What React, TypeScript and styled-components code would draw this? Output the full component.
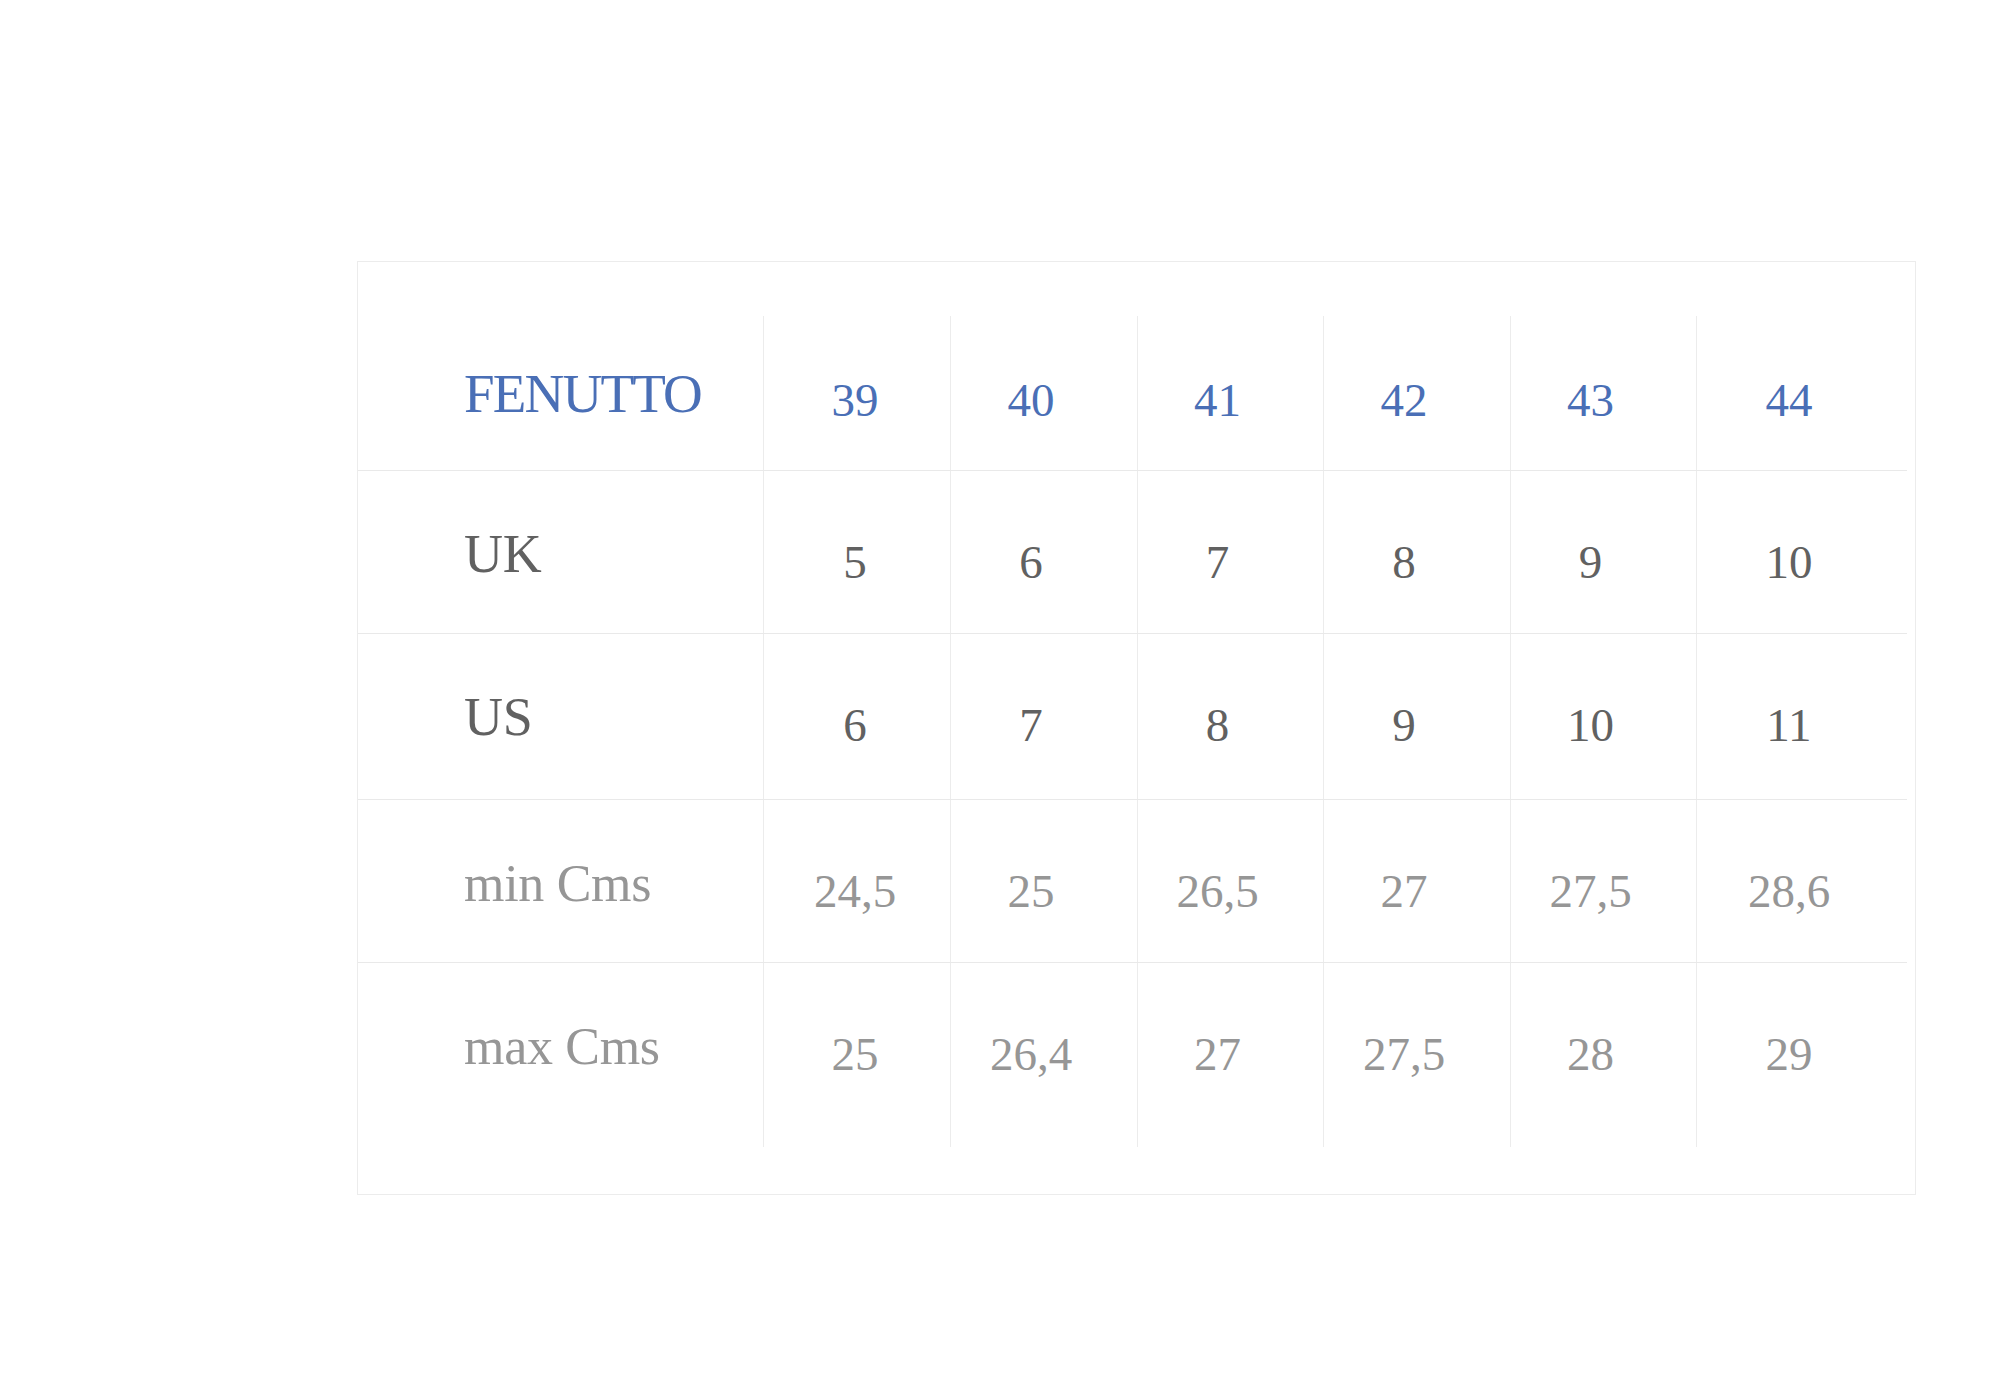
import React from 'react';
import styled, { createGlobalStyle, css } from 'styled-components';

const GlobalStyle = createGlobalStyle`
  html, body {
    margin: 0;
    padding: 0;
    background: #ffffff;
  }
  body {
    font-family: 'Liberation Serif', 'DejaVu Serif', serif;
  }
`;

type Tone = 'head' | 'dark' | 'light';

const toneColor: Record<Tone, string> = {
  head: '#4a6fb6',
  dark: '#616161',
  light: '#969696',
};

const Page = styled.div`
  width: 2000px;
  height: 1400px;
  padding: 261px 0 0 357px;
  box-sizing: border-box;
`;

const Card = styled.section`
  width: 1559px;
  box-sizing: border-box;
  border: 1px solid #ececec;
  padding: 54px 8px 47px 0;
`;

const Grid = styled.div`
  display: flex;
  flex-direction: column;
`;

const Row = styled.div<{ $height: number; $last?: boolean }>`
  display: grid;
  grid-template-columns: 405px 187px 187px 186px 187px 186px 1fr;
  box-sizing: border-box;
  height: ${({ $height }) => $height}px;
  ${({ $last }) =>
    !$last &&
    css`
      border-bottom: 1px solid #e9e9e9;
    `}
`;

const Label = styled.div<{ $tone: Tone; $head?: boolean; $small?: boolean }>`
  padding-left: 106px;
  padding-top: ${({ $head, $small }) => ($head ? 50 : $small ? 58 : 56)}px;
  font-size: ${({ $head, $small }) => ($head ? 55 : $small ? 52 : 54)}px;
  line-height: 1;
  letter-spacing: ${({ $head }) => ($head ? '-1.8px' : '-0.3px')};
  color: ${({ $tone }) => toneColor[$tone]};
  white-space: nowrap;
`;

const Value = styled.div<{ $tone: Tone; $head?: boolean }>`
  border-left: 1px solid #ececec;
  padding-top: ${({ $head }) => ($head ? 61 : 68)}px;
  padding-right: 26px;
  text-align: center;
  font-size: 47px;
  line-height: 1;
  color: ${({ $tone }) => toneColor[$tone]};

  &:nth-child(2) {
    padding-right: 4px;
  }
`;

const rows: { label: string; tone: Tone; values: string[]; height: number; head?: boolean }[] = [
  { label: 'FENUTTO', tone: 'head', values: ['39', '40', '41', '42', '43', '44'], height: 155, head: true },
  { label: 'UK', tone: 'dark', values: ['5', '6', '7', '8', '9', '10'], height: 163 },
  { label: 'US', tone: 'dark', values: ['6', '7', '8', '9', '10', '11'], height: 166 },
  { label: 'min Cms', tone: 'light', values: ['24,5', '25', '26,5', '27', '27,5', '28,6'], height: 163 },
  { label: 'max Cms', tone: 'light', values: ['25', '26,4', '27', '27,5', '28', '29'], height: 184 },
];

export default function App() {
  return (
    <Page>
      <GlobalStyle />
      <Card>
        <Grid>
          {rows.map((row, i) => (
            <Row key={row.label} $height={row.height} $last={i === rows.length - 1}>
              <Label $tone={row.tone} $head={row.head} $small={row.tone === 'light'}>
                {row.label}
              </Label>
              {row.values.map((v, j) => (
                <Value key={j} $tone={row.tone} $head={row.head}>
                  {v}
                </Value>
              ))}
            </Row>
          ))}
        </Grid>
      </Card>
    </Page>
  );
}
